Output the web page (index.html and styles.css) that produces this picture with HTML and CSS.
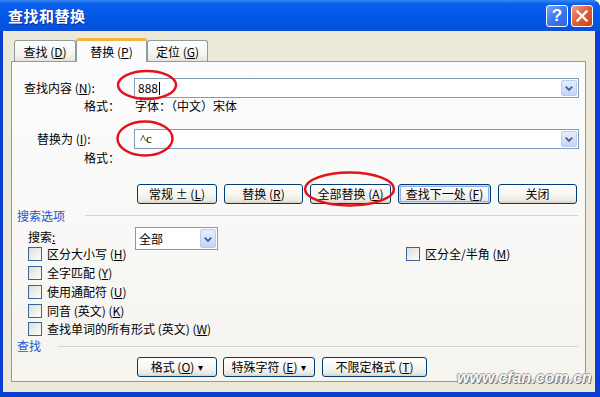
FILE: index.html
```html
<!DOCTYPE html>
<html lang="zh-CN">
<head>
<meta charset="utf-8">
<title>查找和替换</title>
<link rel="stylesheet" href="styles.css">
</head>
<body>
<div class="window">
  <div class="titlebar">
    <span class="title">查找和替换</span>
    <div class="controls">
      <div class="ctl help">?</div>
      <div class="ctl close"><svg width="20" height="20" viewBox="0 0 20 20"><path d="M5.5 5.5 L14.5 14.5 M14.5 5.5 L5.5 14.5" stroke="#fff" stroke-width="2.4" stroke-linecap="square"/></svg></div>
    </div>
  </div>
  <div class="client">
    <div class="tabs">
      <div class="tab">查找 (<u>D</u>)</div>
      <div class="tab active">替换 (<u>P</u>)</div>
      <div class="tab">定位 (<u>G</u>)</div>
    </div>
    <div class="panel">
      <div class="field-row find-row">
        <span class="lbl lbl-find">查找内容 (<u>N</u>):</span>
        <div class="combo wide">
          <span class="val">888<span class="caret"></span></span>
          <span class="drop"><svg width="15" height="16" viewBox="0 0 15 16"><path d="M4 6.5 L7.5 10 L11 6.5" fill="none" stroke="#4D6185" stroke-width="2"/></svg></span>
        </div>
      </div>
      <div class="fmt-row fmt1"><span class="lbl lbl-fmt">格式：</span><span>字体：（中文）宋体</span></div>
      <div class="field-row repl-row">
        <span class="lbl lbl-repl">替换为 (<u>I</u>):</span>
        <div class="combo wide">
          <span class="val val2">^c</span>
          <span class="drop"><svg width="15" height="16" viewBox="0 0 15 16"><path d="M4 6.5 L7.5 10 L11 6.5" fill="none" stroke="#4D6185" stroke-width="2"/></svg></span>
        </div>
      </div>
      <div class="fmt-row fmt2"><span class="lbl lbl-fmt">格式：</span></div>
      <div class="btn-row">
        <div class="btn w80">常规 ± (<u>L</u>)</div>
        <div class="btn w79">替换 (<u>R</u>)</div>
        <div class="btn w81">全部替换 (<u>A</u>)</div>
        <div class="btn w93 default">查找下一处 (<u>F</u>)</div>
        <div class="btn w79">关闭</div>
      </div>
      <div class="section sec-opts">
        <span class="sec-lbl sec-lbl-opts">搜索选项</span>
        <span class="sep"></span>
      </div>
      <div class="search-row">
        <span class="lbl lbl-search">搜索<u>:</u></span>
        <div class="combo small">
          <span class="val">全部</span>
          <span class="drop"><svg width="15" height="18" viewBox="0 0 15 18"><path d="M4 7.5 L7.5 11 L11 7.5" fill="none" stroke="#4D6185" stroke-width="2"/></svg></span>
        </div>
      </div>
      <div class="checks">
        <div class="chk-row">
          <div class="chk first"><span class="box"></span><span>区分大小写 (<u>H</u>)</span></div>
          <div class="chk"><span class="box"></span><span>区分全/半角 (<u>M</u>)</span></div>
        </div>
        <div class="chk-row"><div class="chk"><span class="box"></span><span>全字匹配 (<u>Y</u>)</span></div></div>
        <div class="chk-row"><div class="chk"><span class="box"></span><span>使用通配符 (<u>U</u>)</span></div></div>
        <div class="chk-row"><div class="chk"><span class="box"></span><span>同音 (英文) (<u>K</u>)</span></div></div>
        <div class="chk-row"><div class="chk"><span class="box"></span><span>查找单词的所有形式 (英文) (<u>W</u>)</span></div></div>
      </div>
      <div class="section sec-find">
        <span class="sec-lbl sec-lbl-find">查找</span>
        <span class="sep"></span>
      </div>
      <div class="btn-row bottom-row">
        <div class="btn w80">格式 (<u>O</u>) <span class="tri">▾</span></div>
        <div class="btn w92">特殊字符 (<u>E</u>) <span class="tri">▾</span></div>
        <div class="btn w105">不限定格式 (<u>T</u>)</div>
      </div>
    </div>
  </div>
</div>
<svg class="marks" width="600" height="397" viewBox="0 0 600 397">
  <ellipse cx="147" cy="85" rx="29" ry="14" fill="none" stroke="#E3131B" stroke-width="2.5"/>
  <ellipse cx="145" cy="138.5" rx="27.5" ry="17" fill="none" stroke="#E3131B" stroke-width="2.5"/>
  <ellipse cx="349.5" cy="189" rx="44.5" ry="16.5" fill="none" stroke="#E3131B" stroke-width="2.5"/>
</svg>
<div class="watermark">www.cfan.com.cn</div>
</body>
</html>
```
FILE: styles.css
```css
* { box-sizing: border-box; }
html, body { margin: 0; padding: 0; background: #ffffff; }
body {
  width: 600px; height: 397px; overflow: hidden; position: relative;
  font-family: "Noto Sans CJK SC", "Noto Sans", sans-serif;
  font-size: 12px; color: #000;
}
u { text-decoration: underline; text-underline-offset: 1px; }

.window {
  width: 600px; height: 397px;
  display: flex; flex-direction: column;
  background: #0A3FD2;
  border-radius: 0 8px 0 0;
  overflow: hidden;
}
.titlebar {
  height: 31px; flex: none;
  display: flex; align-items: center; justify-content: space-between;
  padding: 0 7px 0 8px;
  background: linear-gradient(#3A88F6 0%, #0A62EC 12%, #0459E7 40%, #0256E4 70%, #0A4FD8 100%);
}
.title {
  color: #fff; font-weight: bold; font-size: 15px; line-height: 18px;
  text-shadow: 1px 1px 0 #0C2A9A;
  letter-spacing: 0.5px;
}
.controls { display: flex; gap: 3px; }
.ctl {
  width: 22px; height: 22px; border: 1px solid #fff; border-radius: 3px;
  display: flex; align-items: center; justify-content: center;
}
.help {
  background: linear-gradient(135deg, #7AA8F8 0%, #3C7CF2 45%, #2A65E0 100%);
  color: #fff; font-family: "Liberation Sans", sans-serif; font-weight: bold; font-size: 17px; line-height: 20px;
}
.close {
  background: linear-gradient(135deg, #F0A18A 0%, #E2603C 45%, #C9401C 100%);
}

.client {
  flex: 1;
  margin: 0 5px 5px 3px;
  background: #ECE9D8;
  display: flex; flex-direction: column;
  padding-top: 7px;
}
.tabs {
  height: 23px; margin-left: 11px;
  display: flex; align-items: flex-end;
  position: relative; z-index: 2;
}
.tab {
  height: 21px; width: 62px;
  border: 1px solid #919B9C; border-bottom: none; border-radius: 3px 3px 0 0;
  background: linear-gradient(#FFFFFF, #F3F3EF 70%, #E6E4DA);
  display: flex; align-items: center; justify-content: center;
  padding-top: 2px; line-height: 14px;
}
.tab:first-child { width: 62px; }
.tab:last-child { width: 61px; }
.tab.active {
  width: 71px; height: 24px; margin-bottom: -1px;
  background: #FCFCFE;
  border-top: 3px solid #F5B43A;
  padding-top: 0px;
}

.panel {
  margin-left: 8px; width: 575px; height: 321px;
  border: 1px solid #919B9C;
  background: linear-gradient(#FCFCFE, #F5F4EF);
  display: flex; flex-direction: column;
  position: relative; z-index: 1;
}

.lbl { flex: none; line-height: 14px; white-space: nowrap; }
.field-row { display: flex; align-items: center; height: 20px; }
.find-row { margin-top: 16px; }
.repl-row { margin-top: 16px; }
.lbl-find { width: 122px; padding-left: 12px; }
.lbl-repl { width: 122px; padding-left: 25px; }
.fmt-row { display: flex; align-items: center; line-height: 14px; }
.fmt1 { height: 14px; margin-top: 1px; }
.fmt2 { height: 16px; margin-top: 1px; }
.lbl-fmt { width: 123px; padding-left: 72px; }

.combo {
  border: 1px solid #7F9DB9; background: #fff;
  display: flex; align-items: center; justify-content: space-between;
  padding: 1px 1px 1px 3px;
}
.combo.wide { width: 445px; height: 20px; }
.combo.small { width: 83px; height: 23px; align-self: flex-start; }
.val { line-height: 14px; display: flex; align-items: center; }
.val2 { padding-left: 2px; font-family: "Liberation Serif", serif; font-size: 13px; }
.caret { display: inline-block; width: 1px; height: 13px; background: #000; margin-left: 1px; }
.drop {
  width: 16px; height: 100%;
  border: 1px solid #B9CDF5; border-radius: 2px;
  background: linear-gradient(#E6EEFE, #C3D4FA);
  display: flex; align-items: center; justify-content: center;
}

.btn-row { display: flex; margin-left: 125px; margin-top: 18px; height: 20px; gap: 7px; }
.btn {
  height: 20px; border: 1px solid #003C74; border-radius: 3px;
  background: linear-gradient(#FFFFFF 0%, #F6F5F1 55%, #EBE9E1 85%, #D8D2C6 100%);
  display: flex; align-items: center; justify-content: center;
  line-height: 14px; white-space: nowrap; flex: none;
}
.btn.default { box-shadow: inset 0 0 0 1px #C9DDF9, inset 0 0 0 2px #8FB0EE; }
.w80 { width: 80px; }
.w79 { width: 79px; }
.w81 { width: 81px; }
.w93 { width: 93px; }
.w92 { width: 92px; }
.w105 { width: 105px; }
.tri { font-size: 10px; margin-left: 4px; }

.section { display: flex; align-items: center; height: 15px; }
.sec-opts { margin-top: 4px; }
.sec-lbl { color: #2553CF; line-height: 14px; padding-left: 5px; flex: none; }
.sec-lbl-opts { width: 73px; }
.sec-lbl-find { width: 46px; }
.sep { flex: 1; height: 1px; background: #D5D3C3; margin-right: 7px; }

.search-row { display: flex; height: 19px; margin-top: 4px; align-items: flex-start; }
.lbl-search { width: 123px; padding-left: 16px; padding-top: 3px; }

.checks { margin-left: 16px; display: flex; flex-direction: column; margin-top: -1px; }
.chk-row { height: 18.75px; display: flex; align-items: center; }
.chk { display: flex; align-items: center; line-height: 14px; white-space: nowrap; }
.chk.first { width: 378px; }
.box {
  width: 14px; height: 14px; flex: none; margin-right: 5px;
  border: 1px solid #3D6494;
  background: linear-gradient(135deg, #DCDCD7, #FFFFFF);
}

.bottom-row { margin-top: 3px; gap: 6px; }
.bottom-row .w105 { margin-left: 1px; }

.marks { position: absolute; left: 0; top: 0; pointer-events: none; z-index: 10; }
.watermark {
  position: absolute; left: 457px; top: 369px; z-index: 11;
  font-family: "Liberation Sans", sans-serif; font-weight: bold; font-style: italic;
  font-size: 16px; line-height: 18px;
  color: #F7F7F7;
  text-shadow: 1px 1px 0 #7A7A7A, -1px 0 0 #9A9A9A, 0 -1px 0 #A5A5A5;
}
```
